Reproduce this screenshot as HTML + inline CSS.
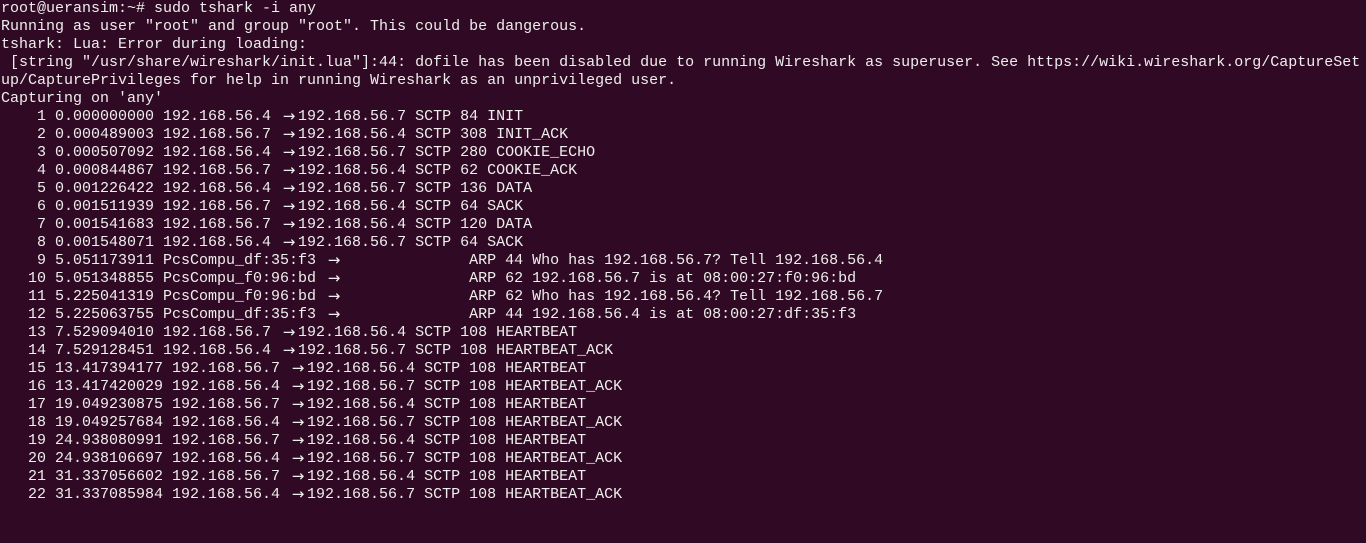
<!DOCTYPE html><html><head><style>
html,body{margin:0;background:#300a24;width:1366px;height:543px;overflow:hidden}
pre{margin:0;padding:0 0 0 1px;font-family:"Liberation Mono","DejaVu Sans Mono",monospace;font-size:15px;line-height:18px;color:#eeeeec;white-space:pre}
pre div{height:18px;overflow:visible}
i{font-style:normal;display:inline-block;width:18px;height:18px;line-height:16px;vertical-align:top;text-align:center;font-family:"DejaVu Sans",sans-serif;font-size:15px}
</style></head><body><pre>root@ueransim:~# sudo tshark -i any
Running as user "root" and group "root". This could be dangerous.
tshark: Lua: Error during loading:
 [string "/usr/share/wireshark/init.lua"]:44: dofile has been disabled due to running Wireshark as superuser. See https://wiki.wireshark.org/CaptureSet
up/CapturePrivileges for help in running Wireshark as an unprivileged user.
Capturing on 'any'
<div>    1 0.000000000 192.168.56.4 <i>→</i>192.168.56.7 SCTP 84 INIT</div><div>    2 0.000489003 192.168.56.7 <i>→</i>192.168.56.4 SCTP 308 INIT_ACK</div><div>    3 0.000507092 192.168.56.4 <i>→</i>192.168.56.7 SCTP 280 COOKIE_ECHO</div><div>    4 0.000844867 192.168.56.7 <i>→</i>192.168.56.4 SCTP 62 COOKIE_ACK</div><div>    5 0.001226422 192.168.56.4 <i>→</i>192.168.56.7 SCTP 136 DATA</div><div>    6 0.001511939 192.168.56.7 <i>→</i>192.168.56.4 SCTP 64 SACK</div><div>    7 0.001541683 192.168.56.7 <i>→</i>192.168.56.4 SCTP 120 DATA</div><div>    8 0.001548071 192.168.56.4 <i>→</i>192.168.56.7 SCTP 64 SACK</div><div>    9 5.051173911 PcsCompu_df:35:f3 <i>→</i>              ARP 44 Who has 192.168.56.7? Tell 192.168.56.4</div><div>   10 5.051348855 PcsCompu_f0:96:bd <i>→</i>              ARP 62 192.168.56.7 is at 08:00:27:f0:96:bd</div><div>   11 5.225041319 PcsCompu_f0:96:bd <i>→</i>              ARP 62 Who has 192.168.56.4? Tell 192.168.56.7</div><div>   12 5.225063755 PcsCompu_df:35:f3 <i>→</i>              ARP 44 192.168.56.4 is at 08:00:27:df:35:f3</div><div>   13 7.529094010 192.168.56.7 <i>→</i>192.168.56.4 SCTP 108 HEARTBEAT</div><div>   14 7.529128451 192.168.56.4 <i>→</i>192.168.56.7 SCTP 108 HEARTBEAT_ACK</div><div>   15 13.417394177 192.168.56.7 <i>→</i>192.168.56.4 SCTP 108 HEARTBEAT</div><div>   16 13.417420029 192.168.56.4 <i>→</i>192.168.56.7 SCTP 108 HEARTBEAT_ACK</div><div>   17 19.049230875 192.168.56.7 <i>→</i>192.168.56.4 SCTP 108 HEARTBEAT</div><div>   18 19.049257684 192.168.56.4 <i>→</i>192.168.56.7 SCTP 108 HEARTBEAT_ACK</div><div>   19 24.938080991 192.168.56.7 <i>→</i>192.168.56.4 SCTP 108 HEARTBEAT</div><div>   20 24.938106697 192.168.56.4 <i>→</i>192.168.56.7 SCTP 108 HEARTBEAT_ACK</div><div>   21 31.337056602 192.168.56.7 <i>→</i>192.168.56.4 SCTP 108 HEARTBEAT</div><div>   22 31.337085984 192.168.56.4 <i>→</i>192.168.56.7 SCTP 108 HEARTBEAT_ACK</div></pre></body></html>
